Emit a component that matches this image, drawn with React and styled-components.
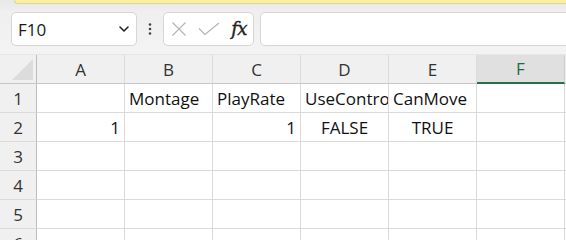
import React from "react";
import styled, { createGlobalStyle } from "styled-components";

const Global = createGlobalStyle`
  html, body { margin: 0; padding: 0; }
  body {
    background: #f3f3f3;
    overflow: hidden;
    font-family: "Open Sans", "Noto Sans", sans-serif;
    width: 566px;
    height: 240px;
  }
`;

const Page = styled.div`
  width: 566px;
  height: 240px;
  overflow: hidden;
  display: flex;
  flex-direction: column;
  background: linear-gradient(#e8e8e8 0px, #efefef 12px, #f3f3f3 50px);
`;

const Banner = styled.div`
  flex: none;
  height: 3px;
  margin-left: 14px;
  background: #fcf09c;
  border-bottom: 1px solid #d9d4b0;
  border-left: 1px solid #d9d4b0;
  border-bottom-left-radius: 4px;
`;

const FormulaBar = styled.div`
  flex: none;
  display: flex;
  align-items: center;
  height: 34px;
  padding: 8px 0 0 11px;
  margin-bottom: 8px;
`;

const Box = styled.div`
  box-sizing: border-box;
  height: 34px;
  background: #ffffff;
  border: 1px solid #d6d6d6;
  border-radius: 5px;
  display: flex;
  align-items: center;
`;

const NameBox = styled(Box)`
  width: 126px;
  padding: 0 7px 0 6px;
  justify-content: space-between;
  font-size: 17px;
  color: #1a1a1a;
`;

const Dots = styled.div`
  width: 26px;
  display: flex;
  justify-content: center;
`;

const FxBox = styled(Box)`
  width: 91px;
  padding: 0 6px 0 7px;
  justify-content: space-between;
`;

const FxText = styled.span`
  font-family: "DejaVu Serif", "Liberation Serif", serif;
  font-style: italic;
  font-size: 18px;
  color: #222;
  letter-spacing: -0.5px;
  margin-top: -2px;
  -webkit-text-stroke: 0.4px #222;
`;

const FormulaInput = styled(Box)`
  flex: 1;
  margin-left: 6px;
  margin-right: -10px;
  border-radius: 5px 0 0 5px;
`;

const Grid = styled.div`
  flex: none;
  display: grid;
  grid-template-columns: 37px repeat(7, 88px);
  grid-auto-rows: 29px;
  border-top: 1px solid #e6e6e6;
  background: #ffffff;
`;

const Cell = styled.div`
  box-sizing: border-box;
  border-right: 1px solid #dadada;
  border-bottom: 1px solid #dadada;
  font-size: 17px;
  color: #111;
  white-space: nowrap;
  overflow: hidden;
  padding: 0 4px;
  display: flex;
  align-items: center;
  justify-content: ${(p) =>
    p.$align === "right" ? "flex-end" : p.$align === "center" ? "center" : "flex-start"};
`;

const ColHead = styled.div`
  box-sizing: border-box;
  background: ${(p) => (p.$active ? "#e0e0e0" : "#f0f0f0")};
  border-right: 1px solid ${(p) => (p.$active ? "#cfcfcf" : "#dcdcdc")};
  border-bottom: ${(p) => (p.$active ? "2px solid #217346" : "1px solid #c6c6c6")};
  color: ${(p) => (p.$active ? "#1d6b40" : "#333")};
  font-size: 17px;
  display: flex;
  align-items: center;
  justify-content: center;
`;

const Corner = styled.div`
  box-sizing: border-box;
  background: #f0f0f0;
  border-right: 1px solid #bdbdbd;
  border-bottom: 1px solid #c6c6c6;
  display: flex;
  align-items: flex-end;
  justify-content: flex-end;
  padding: 0 3px 3px 0;
`;

const Triangle = styled.div`
  width: 0;
  height: 0;
  border-left: 21px solid transparent;
  border-bottom: 21px solid #dcdcdc;
`;

const RowHead = styled.div`
  box-sizing: border-box;
  background: #f0f0f0;
  border-right: 1px solid #bdbdbd;
  border-bottom: 1px solid #dadada;
  color: #333;
  font-size: 17px;
  display: flex;
  align-items: center;
  justify-content: center;
`;

const cols = ["A", "B", "C", "D", "E", "F", "G"];
const data = {
  1: { B: "Montage", C: "PlayRate", D: "UseControllerRotationYaw", E: "CanMove" },
  2: { A: "1", C: "1", D: "FALSE", E: "TRUE" },
};
const aligns = { 2: { A: "right", C: "right", D: "center", E: "center" } };

export default function App() {
  return (
    <Page>
      <Global />
      <Banner />
      <FormulaBar>
        <NameBox>
          <span>F10</span>
          <svg width="10" height="6" viewBox="0 0 10 6">
            <path d="M1 1 L5 5 L9 1" fill="none" stroke="#222" strokeWidth="1.6" strokeLinecap="round" strokeLinejoin="round" />
          </svg>
        </NameBox>
        <Dots>
          <svg width="4" height="12" viewBox="0 0 4 12">
            <circle cx="2" cy="1.5" r="1.3" fill="#444" />
            <circle cx="2" cy="6" r="1.3" fill="#444" />
            <circle cx="2" cy="10.5" r="1.3" fill="#444" />
          </svg>
        </Dots>
        <FxBox>
          <svg width="16" height="16" viewBox="0 0 16 16">
            <path d="M1.5 1.5 L14.5 14.5 M14.5 1.5 L1.5 14.5" stroke="#b5b5b5" strokeWidth="1.2" fill="none" />
          </svg>
          <svg width="22" height="14" viewBox="0 0 22 14">
            <path d="M1 6.5 L7 12.5 L21 1" stroke="#b5b5b5" strokeWidth="1.2" fill="none" />
          </svg>
          <FxText>fx</FxText>
        </FxBox>
        <FormulaInput />
      </FormulaBar>
      <Grid>
        <Corner>
          <Triangle />
        </Corner>
        {cols.map((c) => (
          <ColHead key={c} $active={c === "F"}>{c}</ColHead>
        ))}
        {[1, 2, 3, 4, 5, 6].map((r) => (
          <React.Fragment key={r}>
            <RowHead>{r}</RowHead>
            {cols.map((c) => (
              <Cell key={c} $align={(aligns[r] && aligns[r][c]) || "left"}>
                {(data[r] && data[r][c]) || ""}
              </Cell>
            ))}
          </React.Fragment>
        ))}
      </Grid>
    </Page>
  );
}
